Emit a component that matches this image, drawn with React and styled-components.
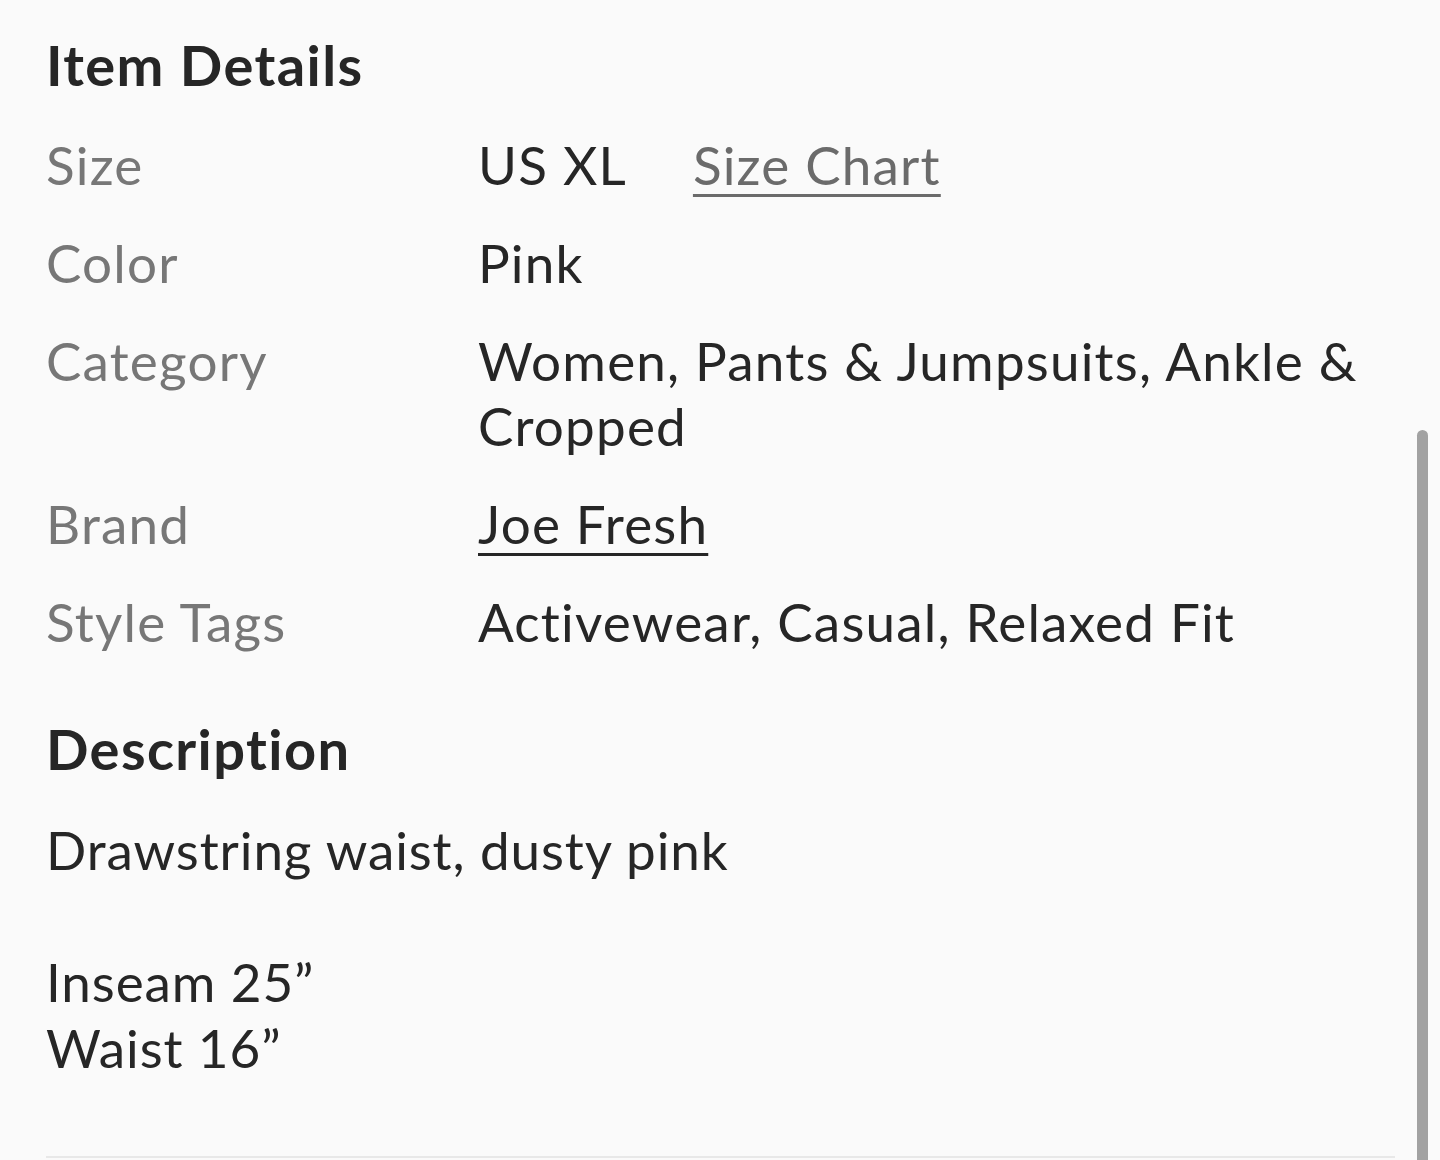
import React from "react";
import styled, { createGlobalStyle } from "styled-components";

const GlobalStyle = createGlobalStyle`
  html, body {
    margin: 0;
    padding: 0;
    background: #fafafa;
  }
  body {
    font-family: Lato, "Noto Sans", sans-serif;
    color: #262626;
    -webkit-font-smoothing: antialiased;
  }
`;

const Page = styled.div`
  position: relative;
  width: 1440px;
  height: 1160px;
  overflow: hidden;
  background: #fafafa;
`;

const Content = styled.div`
  padding: 30px 45px 0 46px;
  box-sizing: border-box;
`;

const Heading = styled.h2`
  margin: 0;
  font-size: 56px;
  line-height: 70px;
  font-weight: 700;
  color: #262626;
  letter-spacing: 1.4px;
`;

const DetailsTable = styled.div`
  display: grid;
  grid-template-columns: 432px 1fr;
  row-gap: 33px;
  margin-top: 32px;
  font-size: 53px;
  line-height: 65px;
  letter-spacing: 1.2px;
`;

const Label = styled.div`
  color: #777;
`;

const Value = styled.div`
  color: #262626;
  display: flex;
  flex-wrap: wrap;
  gap: 0 66px;
`;

const Link = styled.a`
  color: ${p => (p.muted ? "#6b6b6b" : "#262626")};
  text-decoration: underline;
  text-decoration-thickness: 3px;
  text-underline-offset: 9px;
  cursor: pointer;
`;

const Description = styled.section`
  margin-top: 60px;
`;

const Body = styled.p`
  margin: 33px 0 0;
  font-size: 53px;
  line-height: 66px;
  letter-spacing: 0.9px;
  white-space: pre-line;
`;

const Divider = styled.hr`
  position: absolute;
  left: 46px;
  right: 45px;
  bottom: 2px;
  margin: 0;
  border: 0;
  border-top: 2px solid #e8e8e8;
`;

const ScrollThumb = styled.div`
  position: absolute;
  top: 430px;
  right: 12px;
  width: 11px;
  height: 760px;
  border-radius: 6px;
  background: #a2a2a2;
`;

const details = [
  { label: "Size", value: "US XL", chart: true },
  { label: "Color", value: "Pink" },
  { label: "Category", value: "Women, Pants & Jumpsuits, Ankle & Cropped" },
  { label: "Brand", value: "Joe Fresh", link: true },
  { label: "Style Tags", value: "Activewear, Casual, Relaxed Fit" }
];

const App = () => (
  <Page>
    <GlobalStyle />
    <Content>
      <Heading>Item Details</Heading>
      <DetailsTable>
        {details.map(d => (
          <React.Fragment key={d.label}>
            <Label>{d.label}</Label>
            <Value>
              {d.link ? <Link>{d.value}</Link> : <span>{d.value}</span>}
              {d.chart && <Link muted>Size Chart</Link>}
            </Value>
          </React.Fragment>
        ))}
      </DetailsTable>
      <Description>
        <Heading>Description</Heading>
        <Body>
          {"Drawstring waist, dusty pink\n\nInseam 25\u201D\nWaist 16\u201D"}
        </Body>
      </Description>
    </Content>
    <Divider />
    <ScrollThumb />
  </Page>
);

export default App;
